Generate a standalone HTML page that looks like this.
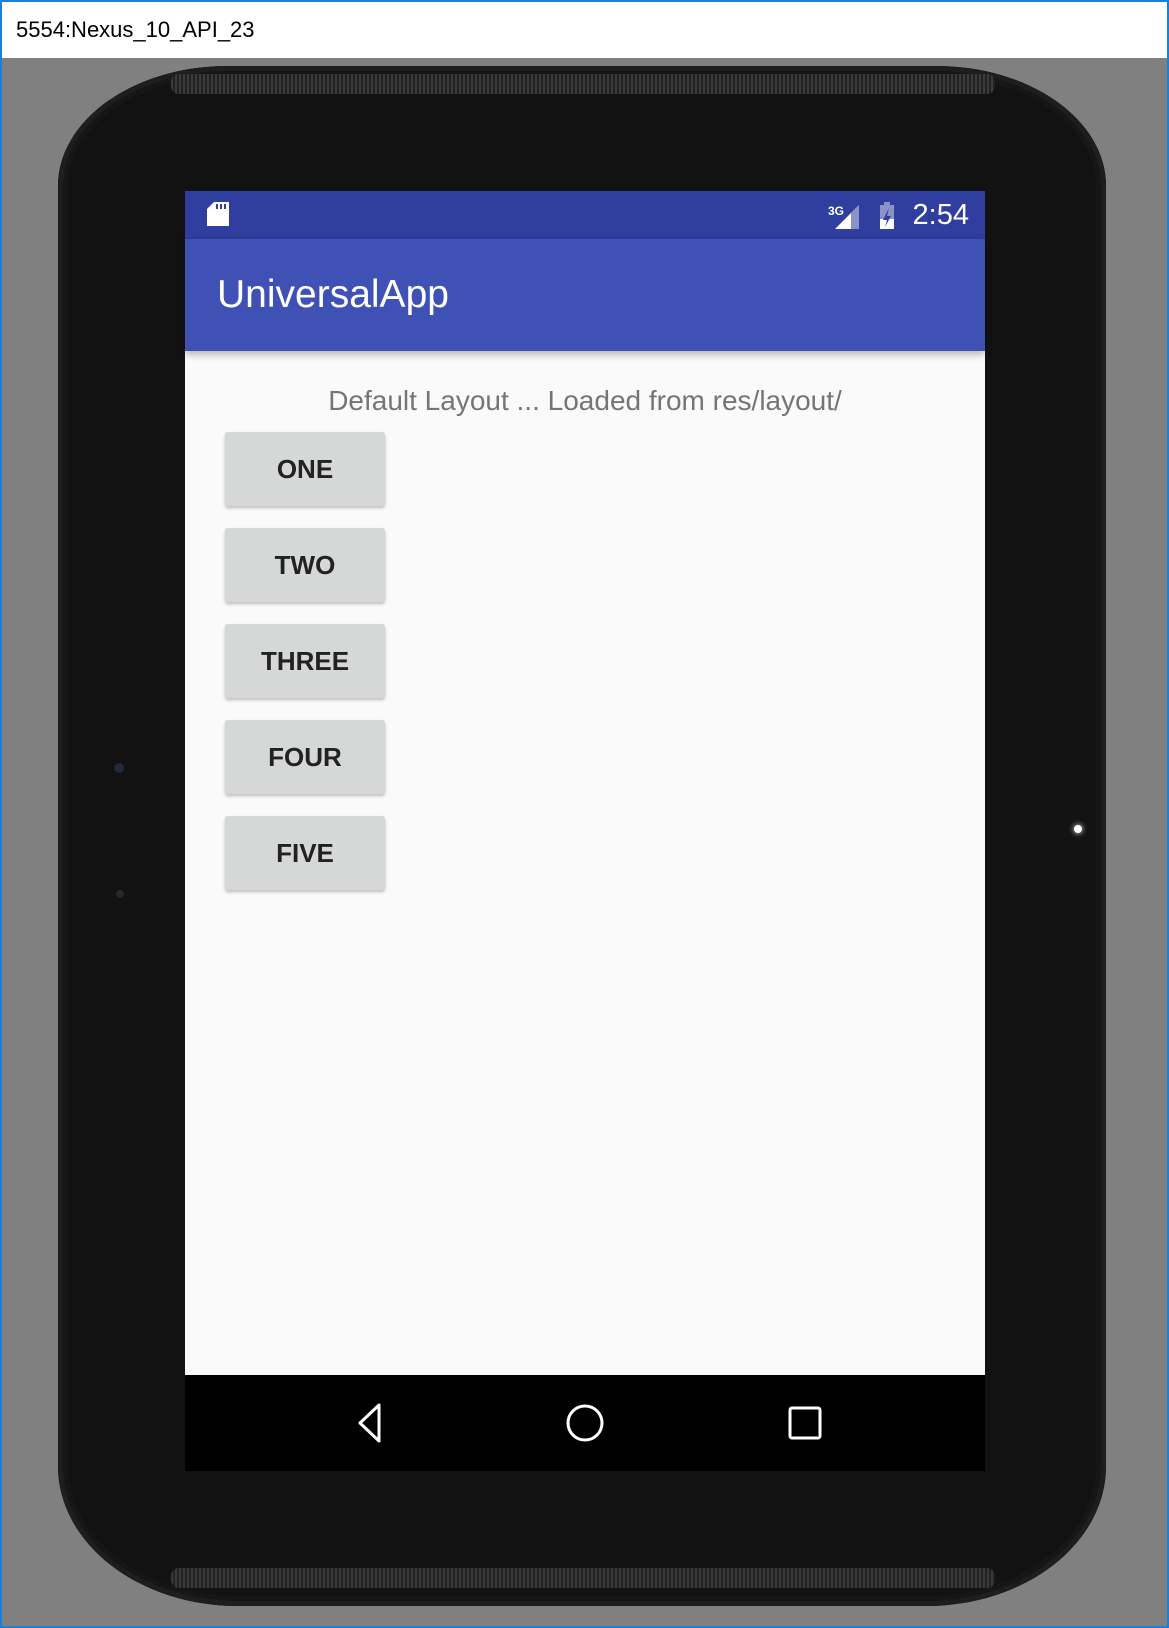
<!DOCTYPE html>
<html><head><meta charset="utf-8"><style>
*{margin:0;padding:0;box-sizing:border-box}
html,body{width:1169px;height:1628px;overflow:hidden;background:#808080;font-family:"Liberation Sans",sans-serif}
.frame{position:absolute;left:0;top:0;width:1169px;height:1628px;border:2px solid #1a7fd6;border-top-width:2px}
.titlebar{position:absolute;left:2px;top:2px;width:1165px;height:56px;background:#fff;font-size:22px;color:#000;padding:15px 0 0 14px}
.device{position:absolute;left:58px;top:66px;width:1048px;height:1540px;background:#121212;border-radius:170px 170px 180px 180px/120px 120px 140px 140px;box-shadow:inset 0 0 0 5px #1e1e1e, inset 0 0 0 10px #161616}
.grill{position:absolute;left:113px;width:824px;height:20px;background:repeating-linear-gradient(90deg,#3a3a3a 0 2px,#222 2px 4px);border-radius:8px}
.screen{position:absolute;left:185px;top:191px;width:800px;height:1280px;background:#fafafa}
.status{position:absolute;left:0;top:0;width:800px;height:48px;background:#303f9f}
.appbar{position:absolute;left:0;top:48px;width:800px;height:112px;background:#3f51b5;box-shadow:0 3px 8px rgba(0,0,0,.3)}
.appbar span{position:absolute;left:32px;top:34px;color:#fff;font-size:39px}
.msg{position:absolute;left:0;width:800px;top:194px;text-align:center;font-size:28px;color:#757575}
.btn{position:absolute;left:40px;width:160px;height:74px;background:#d6d7d7;border-radius:3px;box-shadow:0 2px 3px rgba(0,0,0,.25);text-align:center;line-height:74px;font-size:26px;font-weight:bold;color:#222}
.nav{position:absolute;left:0;top:1184px;width:800px;height:96px;background:#000}
.clock{position:absolute;right:16px;top:8px;color:#fff;font-size:29px}
</style></head><body>
<div class="frame"></div>
<div class="titlebar">5554:Nexus_10_API_23</div>
<div class="device">
  <div class="grill" style="top:8px"></div>
  <div class="grill" style="top:1502px"></div>
  <div style="position:absolute;left:56px;top:697px;width:10px;height:10px;border-radius:50%;background:#222a3a"></div>
  <div style="position:absolute;left:58px;top:824px;width:8px;height:8px;border-radius:50%;background:#2a2a2a"></div>
  <div style="position:absolute;left:1016px;top:759px;width:8px;height:8px;border-radius:50%;background:#fff;box-shadow:0 0 6px #fff"></div>
</div>
<div class="screen">
  <div class="status">
    <svg width="800" height="48" style="position:absolute;left:0;top:0">
      <path d="M29 11h15v24h-22v-17z" fill="#fff"/>
      <rect x="31" y="13" width="2" height="5" fill="#303f9f"/><rect x="35" y="13" width="2" height="5" fill="#303f9f"/><rect x="39" y="13" width="2" height="5" fill="#303f9f"/>
      <text x="643" y="24" fill="#fff" font-size="12" font-weight="bold" font-family="Liberation Sans">3G</text>
      <path d="M650 38l24-24v24z" fill="#fff"/><path d="M666 22l8-8v24h-8z" fill="#8a93c8"/>
      <rect x="695" y="14" width="14" height="24" fill="#8a93c8"/><rect x="699" y="11" width="6" height="3" fill="#8a93c8"/>
      <path d="M695 28h14v10h-14z" fill="#fff"/><path d="M704 17l-6 12h4l-2 7 6-11h-4z" fill="#303f9f"/>
    </svg>
    <div class="clock">2:54</div>
  </div>
  <div class="appbar"><span>UniversalApp</span></div>
  <div class="msg">Default Layout ... Loaded from res/layout/</div>
  <div class="btn" style="top:241px">ONE</div>
  <div class="btn" style="top:337px">TWO</div>
  <div class="btn" style="top:433px">THREE</div>
  <div class="btn" style="top:529px">FOUR</div>
  <div class="btn" style="top:625px">FIVE</div>
  <div class="nav">
    <svg width="800" height="96">
      <path d="M194 30v36l-19-18z" fill="none" stroke="#fff" stroke-width="3" stroke-linejoin="round"/>
      <circle cx="400" cy="48" r="17" fill="none" stroke="#fff" stroke-width="3"/>
      <rect x="605" y="33" width="30" height="30" rx="2" fill="none" stroke="#fff" stroke-width="3"/>
    </svg>
  </div>
</div>
</body></html>
